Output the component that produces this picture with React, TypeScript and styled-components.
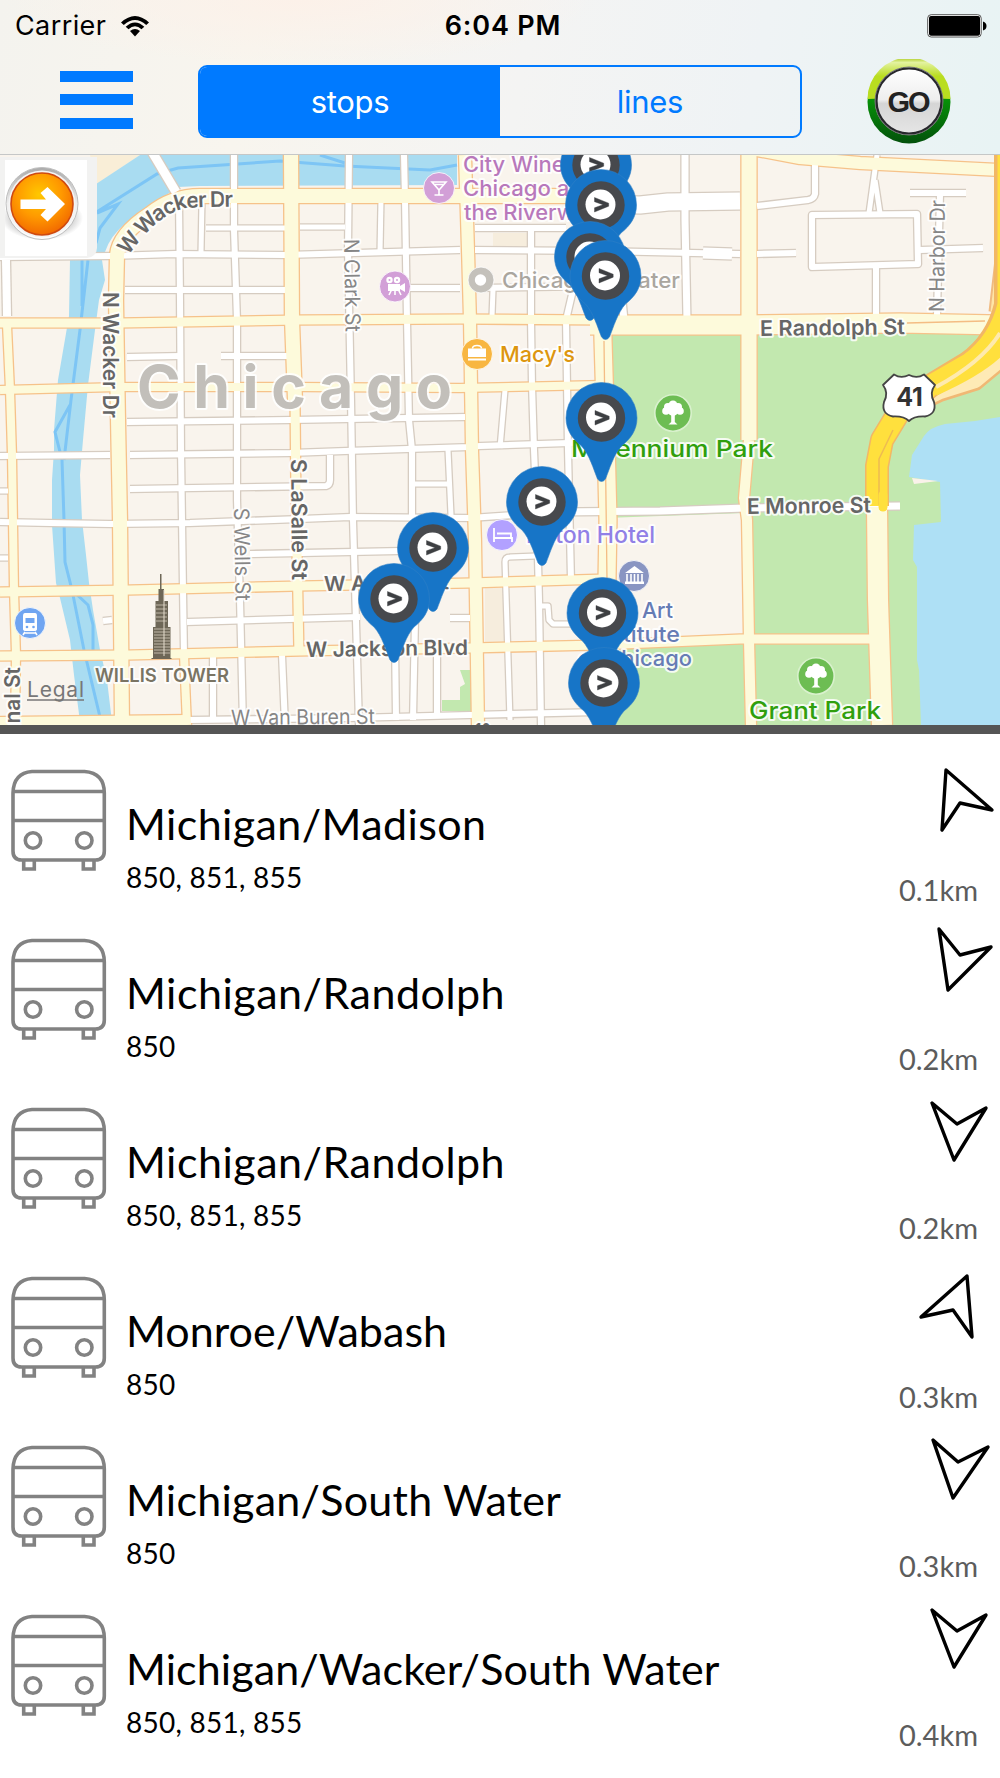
import React from 'react'
import styled, { createGlobalStyle } from 'styled-components';
import {useState} from "react"

const GlobalStyle = createGlobalStyle`
  * { box-sizing: border-box; }
  body { margin: 0; background: #fff; }
`

type Stop = { name: string; space: number; lines: string; distance: string; arrow: string }

const stops: Stop[] = [
  { name: "Michigan/Madison", space: 0.4, lines: "850, 851, 855", distance: "0.1km", arrow: "66,23 112,63 80,56 62,83" },
  { name: "Michigan/Randolph", space: 0.5, lines: "850", distance: "0.2km", arrow: "59,13 80,39 111,31 68,74" },
  { name: "Michigan/Randolph", space: 0.5, lines: "850, 851, 855", distance: "0.2km", arrow: "52,18 77,39 106,23 74,75" },
  { name: "Monroe/Wabash", space: 0.05, lines: "850", distance: "0.3km", arrow: "87,22 41,63 73,56 92,83" },
  { name: "Michigan/South Water", space: 0.25, lines: "850", distance: "0.3km", arrow: "53,17 78,39 108,24 73,75" },
  { name: "Michigan/Wacker/South Water", space: 0.1, lines: "850, 851, 855", distance: "0.4km", arrow: "52,18 77,39 106,23 74,75" },
]

const pins = [[596, 165], [601, 205], [590, 257], [605.5, 276], [601.5, 418], [542, 502], [433, 548], [394, 599], [602.5, 613], [604, 683]]

// streets: [path, width]
const streets: [string, number][] = [
  ["M0 257 L110 256 L175 254 L285 255 L460 250", 6],
  ["M125 290 L285 290 M408 288 L460 288 M475 288 L600 286", 6],
  ["M127 357 L180 356 M221 356 L290 356", 6],
  ["M127 422 L290 420 L465 417", 6],
  ["M0 456 L110 455 M130 455 L290 453 L345 451 L470 447 L480 446 L600 442", 6],
  ["M130 489 L326 486 Q330 485 330 480 L330 455", 6],
  ["M0 522 L50 523 L110 524 L190 523 L300 519 L350 517 L470 518 L560 512", 6],
  ["M555 512 L660 511 L745 508 M745 508 L900 506", 7],
  ["M0 491 L8 491 M0 558 L8 558", 5],
  ["M250 554 L400 551", 6],
  ["M187 622 L360 617 M450 618 L470 618 M103 621 L112 620", 6],
  ["M187 720 L350 718 L470 715 L600 712", 6],
  ["M6 260 L7 316", 8],
  ["M179 200 L180 300 L181 450 L183 590 L184 655", 6],
  ["M202 200 L201 252 M206 228 L285 228 M300 227 L345 227", 5],
  ["M234 155 L234 230 L237 320 L237 500 L240 600 L243 725", 6],
  ["M282 655 L285 725 M213 655 L213 720", 6],
  ["M349 155 L348 250 L351 400 L353 520 L357 655 L359 725", 6],
  ["M381 200 L380 252", 5],
  ["M404 155 L405 200 L407 320 L409 420 L412 450 L412 518", 6],
  ["M448 450 L451 515 M412 484 L450 484", 5],
  ["M395 640 L396 720 M415 620 L413 720 M437 650 L437 718", 6],
  ["M531 225 L531 320 L532 385 L534 450 L537 520 L539 600 L541 725", 6],
  ["M505 390 L500 448 M493 290 L492 316", 5],
  ["M475 228 L566 228 M475 250 L600 251 L740 254", 6],
  ["M573 290 L566 320 L568 450 L571 580", 6],
  ["M510 720 L505 562 Q505 557 510 557 L536 556", 5],
  ["M540 606 L548 606 L549 620 L553 624 L570 624", 5],
  ["M600 204 L640 205 L668 202 L740 201", 17],
  ["M685 155 L685 220 L687 320 M622 300 L624 320", 7],
  ["M703 253 L732 254", 11],
  ["M815 162 L815 194 Q814 199 808 200 L757 206", 6],
  ["M812 215 L917 214 L918 264 L812 267 Z", 6],
  ["M877 155 L869 213 M875 180 L880 213", 5],
  ["M876 268 L876 315", 6],
  ["M910 193 L966 193 M940 195 L937 315 M920 250 L983 248 M757 254 L796 253", 6],
  ["M151 150 L176 192", 9],
]

const avenues: [string, number][] = [
  ["M0 323 L120 323 L300 320 L460 319 L600 320", 9],
  ["M590 325 L740 325 L900 323 L1000 325", 19],
  ["M0 390 L120 387 L300 387 L460 388 L600 385", 8],
  ["M0 592 L130 590 L300 586 L470 583 L605 579", 9],
  ["M0 656 L130 655 L300 651 L470 648 L600 645 L740 639 L870 639", 9],
  ["M0 722 L187 720", 10],
  ["M7 325 L10 390 L12 455 L14 590 L16 655 L15 725", 8],
  ["M184 655 L187 725", 8],
  ["M200 196 L460 196 L600 196", 14],
  ["M200 196 Q172 196 150 214 Q119 234 117 255 L116 300 L118 420 L120 520 L122 725", 14],
  ["M291 155 L292 320 L295 400", 14],
  ["M295 400 L296 500 L299 655", 9],
  ["M465 155 L468 250 L470 320 L472 450 L475 540 L478 725", 12],
  ["M600 155 L603 340 L606 440 L608 520 L607 580 L606 725", 17],
  ["M749 155 L749 440", 15],
  ["M749 440 L744 498 L747 520 L749 640 L751 725", 10],
  ["M877 507 L878 600 L882 725", 20],
  ["M757 150 L800 158 L860 163 L1000 170", 12],
]

type MapLabel = { x: number; y: number; w?: number; size: number; color: string; weight?: number; rot?: number; text: string; anchor?: "start" | "middle" | "end" }

const labels: MapLabel[] = [
  { x: 137, y: 408, w: 315, size: 59, color: "#c2bfba", weight: 700, text: "Chicago" },
  { x: 463, y: 172, w: 123, size: 21, color: "#b878bb", text: "City Winery" },
  { x: 463, y: 196, w: 114, size: 21, color: "#b878bb", text: "Chicago at" },
  { x: 464, y: 220, w: 141, size: 21, color: "#b878bb", text: "the Riverwalk" },
  { x: 502, y: 288, w: 178, size: 22, color: "#aaa69f", text: "Chicago Theater" },
  { x: 500, y: 362, w: 75, size: 22, color: "#dd960f", weight: 500, text: "Macy's" },
  { x: 571, y: 457, w: 202, size: 23.5, color: "#309f0d", text: "Millennium Park" },
  { x: 749, y: 719, w: 132, size: 24, color: "#309f0d", text: "Grant Park" },
  { x: 760, y: 336, w: 145, size: 21.5, color: "#666", weight: 600, rot: -0.7, text: "E Randolph St" },
  { x: 747, y: 514, w: 124, size: 21.5, color: "#666", weight: 600, rot: -0.7, text: "E Monroe St" },
  { x: 526, y: 543, w: 129, size: 22.5, color: "#9180e6", text: "Hilton Hotel" },
  { x: 635, y: 618, w: 76, size: 21.5, color: "#667cb5", anchor: "middle", text: "The Art" },
  { x: 635, y: 642, w: 90, size: 21.5, color: "#667cb5", anchor: "middle", text: "Institute" },
  { x: 635, y: 666, w: 114, size: 21.5, color: "#667cb5", anchor: "middle", text: "of Chicago" },
  { x: 324, y: 591, w: 125, size: 20.5, color: "#666", weight: 600, rot: -0.8, text: "W Adams St" },
  { x: 306, y: 657, w: 162, size: 21, color: "#666", weight: 600, rot: -0.8, text: "W Jackson Blvd" },
  { x: 95, y: 682, w: 134, size: 18.5, color: "#7a7463", weight: 600, text: "WILLIS TOWER" },
  { x: 103, y: 292, w: 126, size: 21.5, color: "#666", weight: 600, rot: 90, text: "N Wacker Dr" },
  { x: 344, y: 239, w: 93, size: 21, color: "#868686", weight: 400, rot: 89, text: "N Clark St" },
  { x: 291, y: 459, w: 121, size: 21.5, color: "#666", weight: 600, rot: 89.5, text: "S LaSalle St" },
  { x: 234, y: 508, w: 93, size: 21, color: "#868686", weight: 400, rot: 89, text: "S Wells St" },
  { x: 944, y: 312, w: 112, size: 21, color: "#868686", weight: 400, rot: -89.5, text: "N Harbor Dr" },
  { x: 20, y: 751, w: 84, size: 21.5, color: "#666", weight: 600, rot: -90, text: "Canal St" },
  { x: 231, y: 725, w: 144, size: 21, color: "#868686", weight: 400, rot: -0.5, text: "W Van Buren St" },
  { x: 475, y: 738, w: 16, size: 20, color: "#666", weight: 600, text: "10" },
]

const Pin = ({x, y}: {x: number; y: number}) => <g transform={`translate(${x} ${y})`}>
  <path d="M-35.5 0 A35.5 35.5 0 1 1 35.5 0 C35.5 12 29 21 20 28 C12 37 8 51 4 61 Q0 66 -4 61 C-8 51 -12 37 -20 28 C-29 21 -35.5 12 -35.5 0 Z" fill="#1775c7" stroke="#2f80c6" strokeWidth="0.6" />
  <circle r="23.7" fill="#47494d" />
  <circle cx="-0.5" cy="-0.5" r="15" fill="#fff" />
  <path d="M-6.5 -7.5 L7.7 -1.8 V1.2 L-6.5 7 V2.8 L2 -0.3 L-6.5 -3.3 Z" fill="#3d3f42" stroke="#3d3f42" strokeWidth="0.4" />
</g>

const Tree = ({x, y}: {x: number; y: number}) => <g transform={`translate(${x} ${y})`}>
  <circle r="18.2" fill="#6dbd53" stroke="#d9f1cd" strokeWidth="1.6" />
  <g fill="#fff">
    <circle cx="0" cy="-8" r="4.5" /><circle cx="-5" cy="-6" r="4" /><circle cx="5" cy="-6" r="4" />
    <circle cx="-7" cy="-2" r="3.8" /><circle cx="7" cy="-2" r="3.8" /><circle cx="0" cy="-2" r="5" />
    <path d="M-1.8 0 H1.8 V9 L4.5 11.5 H-4.5 L-1.8 9 Z" />
  </g>
</g>

const MapView = () => <MapSvg viewBox="0 155 1000 570">
  <rect x="0" y="155" width="1000" height="570" fill="#f9f4ed" />
  <path d="M90 155 H140 L97 184 Z" fill="#f9eed7" />
  <path d="M493 233 h34 v14 h-34 Z M485 588 h21 v57 h-21 Z" fill="#f6eddd" />

  <g fill="#a9dcf1">
    <path d="M90 188 L140 155 H457 V185 L200 186 L178 187 L127 222 Q110 236 105 252 H90 Z" />
    <path d="M70 260 L69 316 L58 380 L54 430 L54 450 L52 480 V525 L56 583 L60 598 L70 640 L74 675 L80 722 H112 L107 680 L100 650 L93 610 L89 583 L86 555 L82 520 L80 475 L83 440 L88 385 L95 330 L99 300 L105 280 L102 260 Z" />
  </g>
  <g fill="none" stroke="#7dc5f5" strokeWidth="3">
    <path d="M95 213 L157 174 L178 168 L280 161 L345 166 L430 170 L457 165 M97 213 L118 204 L100 228 L96 243 M320 155 L345 163" />
    <path d="M82 260 V306 M88 260 L80 330 L71 400 L64 460 M70 405 L55 432 L62 460 L64 520 L65 562 L72 590 L84 650 L100 717 M72 590 L88 605 L93 625 V650" />
  </g>

  <path d="M605 332 H1000 V725 H605 V645 L745 640 V513 L605 518 Z" fill="#c2e8af" />
  <path d="M442 700 H460 V687 L465 684 L460 670 H474 V711 H442 Z" fill="#c2e8af" />
  <path d="M1000 417 L975 421 L945 424 Q930 427 924 436 L912 455 L909 477 L940 482 L941 522 L914 525 L913 560 L917 567 V660 L919 670 L921 725 H1000 Z" fill="#aee0f5" />
  <path d="M912 478 L938 481 L914 484 Z" fill="#faf2ea" />

  <g fill="none" strokeLinejoin="round">
    {streets.map(([d, w]) => <path key={d} d={d} stroke="#d6ccc1" strokeWidth={w + 2.6} />)}
    {avenues.map(([d, w]) => <path key={d} d={d} stroke="#f6c28a" strokeWidth={w + 2.6} />)}
    {streets.map(([d, w]) => <path key={d + "in"} d={d} stroke="#fff" strokeWidth={w} />)}
    {avenues.map(([d, w]) => <path key={d + "in"} d={d} stroke="#fdfadb" strokeWidth={w} />)}
    <path d="M604 341 L607 580 M907 323 L985 321" stroke="#f4bd84" strokeWidth="1.3" />
  </g>

  {/* lake shore drive */}
  <g fill="none" strokeLinejoin="round">
    <path d="M1002 178 L1000 260 L994 312" stroke="#f0ba80" strokeWidth="11" />
    <path d="M1003 178 L1001 260 L995 312" stroke="#fee5a6" strokeWidth="9" />
    <path d="M1004 358 L975 382 L940 393 L915 405" stroke="#f0b874" strokeWidth="18" />
    <path d="M1004 356 L975 380 L940 391 L915 403" stroke="#feeab5" strokeWidth="16" />
    <path d="M1006 155 V305 Q997 342 968 363 L930 386 L899 412 L882 440 L877 466 V506" stroke="#f2b765" strokeWidth="24" />
    <path d="M1008 155 V305 Q999 342 970 363 L930 386 L899 412 L882 440 L877 466 V506" stroke="#ffe03d" strokeWidth="21" />
    <path d="M1002 346 Q982 368 934 389" stroke="#ffe03d" strokeWidth="14" />
    <path d="M1000 333 Q982 362 936 387" stroke="#feeaae" strokeWidth="4" />
    <path d="M893 430 L879 459 V505" stroke="#eebb52" strokeWidth="1.5" />
    <path d="M883 495 V507" stroke="#ffe03d" strokeWidth="9" strokeLinecap="round" />
  </g>

  {/* willis tower */}
  <g fill="#6e6757">
    <path d="M160 574 h1.5 v15 h2.5 v12 h4 v26 h2.5 v31 h1 v1 h-20 v-1 h1.5 v-31 h2.5 v-26 h3 v-12 h1.5 Z" />
    <path d="M154 629 H170 M154 632 H170 M154 635 H170 M154 638 H170 M154 641 H170 M154 644 H170 M154 647 H170 M154 650 H170 M154 653 H170 M156 605 H167 M156 609 H167 M156 613 H167 M156 617 H167 M156 621 H167" stroke="#c9c1b1" strokeWidth="0.9" />
    <path d="M164 590 V656" stroke="#e5ddce" strokeWidth="1" />
  </g>

  {labels.map(l => <Label key={l.text + l.y} x={l.x} y={l.y} fill={l.color} fontSize={l.size} fontWeight={l.weight || 500}
    textAnchor={l.anchor} textLength={l.w} lengthAdjust={l.size > 50 ? "spacing" : "spacingAndGlyphs"}
    transform={l.rot ? `rotate(${l.rot} ${l.x} ${l.y})` : undefined}>{l.text}</Label>)}
  <path id="wacker" d="M128 256 C144 234 160 215 184 208.500 Q190 207 240 206.500" fill="none" />
  <Label fill="#666" fontSize="21.500" fontWeight={600}><textPath href="#wacker" textLength="124">W Wacker Dr</textPath></Label>
  <LegalText x="27" y="697" textLength="57">Legal</LegalText>
  <path d="M27 700 H84" stroke="#777" strokeWidth="1.6" />

  {/* points of interest */}
  <g stroke="#fff" strokeWidth="0.8">
    <circle cx="439" cy="188" r="15.5" fill="#d29fd7" /><circle cx="395" cy="286.500" r="15.500" fill="#d29fd7" />
    <circle cx="481" cy="280" r="13" fill="#c4c1bb" /><circle cx="477" cy="354" r="15.500" fill="#f8b641" />
    <circle cx="502" cy="535" r="15.500" fill="#b2a1ff" /><circle cx="634" cy="576" r="15.500" fill="#8995c2" />
    <circle cx="30" cy="623" r="15.500" fill="#70a5f1" />
  </g>
  <circle cx="480.500" cy="280" r="5.700" fill="#fff" />
  <g fill="none" stroke="#fff" strokeWidth="1.6">
    <path d="M432 182 H446 L439 190 Z M439 190 V195 M434.500 195 H443.500 M434 184.500 H444" />
    <path d="M472.500 348.500 Q472.500 345.500 477 345.500 Q481.500 345.500 481.500 348.500" />
    <path d="M391.500 290 L389 295 M395 290 V295 M398.500 290 L401 295" />
    <path d="M494 528 V542 M494 538 H512 V542 M497 533.500 H511 V538" strokeWidth="1.800" />
    <path d="M627 574 V582 M631 574 V582 M634.500 574 V582 M638 574 V582 M642 574 V582" />
    <path d="M25 632 L23 635 M35 632 L37 635 M25 633 H35" />
  </g>
  <g fill="#fff">
    <path d="M468 348.500 H486 V357 H468 Z M468 358.500 H486 V360.500 H468 Z" />
    <circle cx="389.500" cy="280" r="3.200" /><circle cx="397" cy="280" r="3.200" />
    <path d="M388 284 H400 V286 L405 283 V292 L400 289 V291 H388 Z" />
    <path d="M625 573 L634.500 566 L644 573 Z M625 581.500 H644 V584 H625 Z" />
    <path d="M25 613 H35 Q37 613 37 616 V629 Q37 631 34 631 H26 Q23 631 23 629 V616 Q23 613 25 613 Z" />
  </g>
  <path d="M25.500 618 H34.500 V623 H25.500 Z" fill="#70a5f1" /><circle cx="27" cy="627" r="1.300" fill="#70a5f1" /><circle cx="33.500" cy="627" r="1.300" fill="#70a5f1" />
  <circle cx="389.500" cy="280" r="1" fill="#d29fd7" /><circle cx="397" cy="280" r="1" fill="#d29fd7" />
  <Tree x={673} y={413} />
  <Tree x={816} y={676} />

  <path d="M894 374.500 Q901 379 909 375 Q917 379 924 374.500 L935 385 Q929 393 934 402 Q937 414 925 416.500 Q914 416 909 421 Q904 416 893 416.500 Q881 414 884 402 Q889 393 883 385 Z" fill="#fff" stroke="#454545" strokeWidth="1.800" strokeLinejoin="round" />
  <ShieldText x="909.500" y="406" textAnchor="middle">41</ShieldText>

  {pins.map(([x, y]) => <Pin key={x + "-" + y} x={x} y={y} />)}
</MapSvg>

const Wifi = () => <svg width="30" height="22" viewBox="0 0 30 22">
  <path d="M1 7.500 Q15 -5.500 29 7.500 L26.200 10 Q15 0 3.800 10 Z" />
  <path d="M5.700 11.800 Q15 3.300 24.300 11.800 L21.500 14.200 Q15 8.400 8.500 14.200 Z" />
  <path d="M10 16 Q15 12 20 16 L15 21.500 Z" />
</svg>

const Battery = () => <svg width="60" height="24" viewBox="0 0 60 24">
  <rect x="0.700" y="0.700" width="53.500" height="22.300" rx="3.500" fill="#fff" stroke="#555" strokeWidth="1" />
  <rect x="2" y="2" width="51" height="19.700" rx="2" />
  <path d="M56 7.500 Q59.500 8.500 59.500 12 Q59.500 15.500 56 16.500 Z" />
</svg>

const GoIcon = () => <svg width="84" height="86" viewBox="0 0 84 86">
  <defs>
    <linearGradient id="goTop" x1="0" y1="0" x2="0" y2="1"><stop offset="0" stopColor="#a8c918" /><stop offset="0.120" stopColor="#e3f2a0" /><stop offset="0.450" stopColor="#b9dd20" /></linearGradient>
    <linearGradient id="goLow" x1="0" y1="0" x2="0" y2="1"><stop offset="0.450" stopColor="#079408" /><stop offset="1" stopColor="#03500b" /></linearGradient>
    <linearGradient id="goFace" x1="0" y1="0" x2="0" y2="1"><stop offset="0" stopColor="#fff" /><stop offset="0.480" stopColor="#eee" /><stop offset="0.540" stopColor="#d5d5d5" /><stop offset="1" stopColor="#e5e5e5" /></linearGradient>
  </defs>
  <circle cx="42" cy="43" r="41.500" fill="url(#goLow)" />
  <path d="M0.500 40 A41.500 41.500 0 0 1 83.500 40 Q42 38 0.500 40 Z" fill="url(#goTop)" />
  <circle cx="42" cy="42" r="34" fill="#e8e8e8" stroke="#777" strokeWidth="1" />
  <circle cx="42" cy="42" r="32.500" fill="url(#goFace)" stroke="#26262b" strokeWidth="2.200" />
  <GoText x="42" y="52.500" textAnchor="middle" textLength="43">GO</GoText>
</svg>

const ArrowIcon = () => <svg width="82" height="96" viewBox="0 0 82 96">
  <defs>
    <radialGradient id="orange" cx="0.450" cy="0.350" r="0.650"><stop offset="0" stopColor="#ffc800" /><stop offset="0.550" stopColor="#ff9a00" /><stop offset="1" stopColor="#f26a00" /></radialGradient>
    <linearGradient id="ring" x1="0" y1="0" x2="0" y2="1"><stop offset="0" stopColor="#aaa" /><stop offset="0.500" stopColor="#eee" /><stop offset="1" stopColor="#fff" /></linearGradient>
    <radialGradient id="shade"><stop offset="0.500" stopColor="#aaa" /><stop offset="1" stopColor="#fff" /></radialGradient>
  </defs>
  <ellipse cx="37" cy="58" rx="41" ry="22" fill="url(#shade)" />
  <circle cx="37" cy="43.500" r="36" fill="url(#ring)" stroke="#bfbfbf" />
  <circle cx="37" cy="44" r="33.500" fill="#f4f4f4" />
  <circle cx="37" cy="44" r="31" fill="url(#orange)" stroke="#cf4a10" strokeWidth="1.600" />
  <path d="M15.500 39.500 H41 L35.500 33 L42.500 27 L60 44 L42.500 61.500 L35.500 55 L41 49 H15.500 Z" fill="#fff" />
</svg>

const BusIcon = () => <svg width="98" height="106" viewBox="10 22 98 106" fill="none" stroke="#828282" strokeWidth="3.600">
  <path d="M32 24.500 H84.500 Q104.300 26 104.300 46 V104 Q104.300 113 95.500 113 H21.500 Q13 113 13 104 V46 Q13.500 26 32 24.500 Z M14 44.500 H104 M14 73.500 H104" />
  <circle cx="33" cy="93.500" r="7.700" /><circle cx="84.300" cy="93.500" r="7.700" />
  <path d="M23.700 113 V122 H34.300 V113 M83.300 113 V122 H94 V113" />
</svg>

const App = () => {
  const [tab, setTab] = useState<string>("stops")

  return <Container>
    <GlobalStyle />
    <Header>
      <StatusBar>
        <Carrier>Carrier <Wifi /></Carrier>
        <Time>6:04 PM</Time>
        <BatteryHolder><Battery /></BatteryHolder>
      </StatusBar>
      <Toolbar>
        <MenuButton aria-label="menu"><Bar /><Bar /><Bar /></MenuButton>
        <Segments>
          <Segment $active={tab === "stops"} onClick={() => setTab("stops")}>stops</Segment>
          <Segment $active={tab === "lines"} onClick={() => setTab("lines")}>lines</Segment>
        </Segments>
        <GoButton><GoIcon /></GoButton>
      </Toolbar>
    </Header>

    <MapHolder>
      <MapView />
      <MapButton><MapButtonFace><ArrowIcon /></MapButtonFace></MapButton>
    </MapHolder>

    <List>
      {stops.map((s, i) => <Row key={i}>
        <BusHolder><BusIcon /></BusHolder>
        <Info>
          <Title $space={s.space}>{s.name}</Title>
          <Lines>{s.lines}</Lines>
        </Info>
        <Side>
          <svg width="120" height="120" viewBox="0 0 120 120"><polygon points={s.arrow} fill="none" stroke="#000" strokeWidth="3.400" strokeLinejoin="round" /></svg>
          <Distance>{s.distance}</Distance>
        </Side>
      </Row>)}
    </List>
  </Container>
}

export default App;

const Container = styled.div`
width: 1000px;
height: 1778px;
overflow: hidden;
display: flex;
flex-direction: column;
background: #fff;
font-family: Lato, "Liberation Sans", sans-serif;
`

const Header = styled.div`
height: 155px;
border-bottom: 1px solid #c5c7c7;
background: radial-gradient(ellipse at 30% 0%, #fcf1e9 0%, transparent 30%), linear-gradient(100deg, #f4f3ee 0%, #f8f5ee 25%, #f4f4f3 52%, #eff3f5 75%, #e8f3f4 100%);
font-family: Inter, "Liberation Sans", sans-serif;
`

const StatusBar = styled.div`
height: 50px;
display: grid;
grid-template-columns: 1fr auto 1fr;
align-items: center;
padding: 1px 13px 0 15px;
`

const Carrier = styled.div`
display: flex;
align-items: center;
gap: 14px;
font-size: 27px;
letter-spacing: 0.400px;
`

const Time = styled.div`
font-size: 27px;
font-weight: 600;
letter-spacing: 0.800px;
padding-left: 4px;
`

const BatteryHolder = styled.div`
display: flex;
justify-content: flex-end;
`

const Toolbar = styled.div`
display: flex;
align-items: center;
height: 104px;
padding: 0 49px 1px 60px;
justify-content: space-between;
`

const MenuButton = styled.div`
width: 73px;
display: flex;
flex-direction: column;
gap: 12.500px;
margin-top: -4px;
cursor: pointer;
`

const Bar = styled.div`
height: 11px;
background: #007aff;
`

const Segments = styled.div`
display: flex;
width: 604px;
height: 73px;
border: 2px solid #007aff;
border-radius: 9px;
overflow: hidden;
`

const Segment = styled.div<{$active: boolean}>`
flex: 1;
display: flex;
align-items: center;
justify-content: center;
font-size: 31px;
font-weight: 400;
letter-spacing: -0.300px;
color: ${({$active}) => $active ? "white" : "#007aff"};
background: ${({$active}) => $active ? "#007aff" : "transparent"};
cursor: pointer;
`

const GoButton = styled.div`
display: flex;
cursor: pointer;
`

const GoText = styled.text`
font-family: "Liberation Sans", sans-serif;
font-weight: 700;
font-size: 29px;
fill: #222;
`

const MapHolder = styled.div`
position: relative;
height: 579px;
border-bottom: 9px solid #555;
`

const MapSvg = styled.svg`
display: block;
width: 1000px;
height: 570px;
`

const Label = styled.text`
font-family: Inter, "Liberation Sans", sans-serif;
paint-order: stroke;
stroke: rgba(255, 255, 255, 0.85);
stroke-width: 4px;
stroke-linejoin: round;
`

const LegalText = styled.text`
font-family: Inter, "Liberation Sans", sans-serif;
font-size: 21px;
fill: #777;
`

const ShieldText = styled.text`
font-family: Inter, "Liberation Sans", sans-serif;
font-size: 25px;
font-weight: 700;
fill: #333;
`

const MapButton = styled.div`
position: absolute;
top: 2px;
left: 0;
width: 97px;
height: 101px;
background: #f2f2f1;
border-bottom-right-radius: 10px;
padding: 3px 0 0 5px;
cursor: pointer;
`

const MapButtonFace = styled.div`
width: 82px;
height: 96px;
background: white;
`

const List = styled.div`
padding-top: 13px;
`

const Row = styled.div`
display: flex;
height: 169px;
`

const BusHolder = styled.div`
width: 126px;
padding: 22px 0 0 10px;
`

const Info = styled.div`
flex: 1;
padding-top: 49px;
white-space: nowrap;
`

const Title = styled.div<{$space: number}>`
font-size: 43px;
line-height: 56px;
letter-spacing: ${({$space}) => $space}px;
color: #000;
`

const Lines = styled.div`
font-size: 28px;
line-height: 34px;
margin-top: 8px;
letter-spacing: 0.250px;
color: #000;
`

const Side = styled.div`
width: 120px;
display: flex;
flex-direction: column;
`

const Distance = styled.div`
font-size: 29px;
line-height: 34px;
margin-top: 6px;
padding-right: 22px;
text-align: right;
color: #5c5c5c;
`
